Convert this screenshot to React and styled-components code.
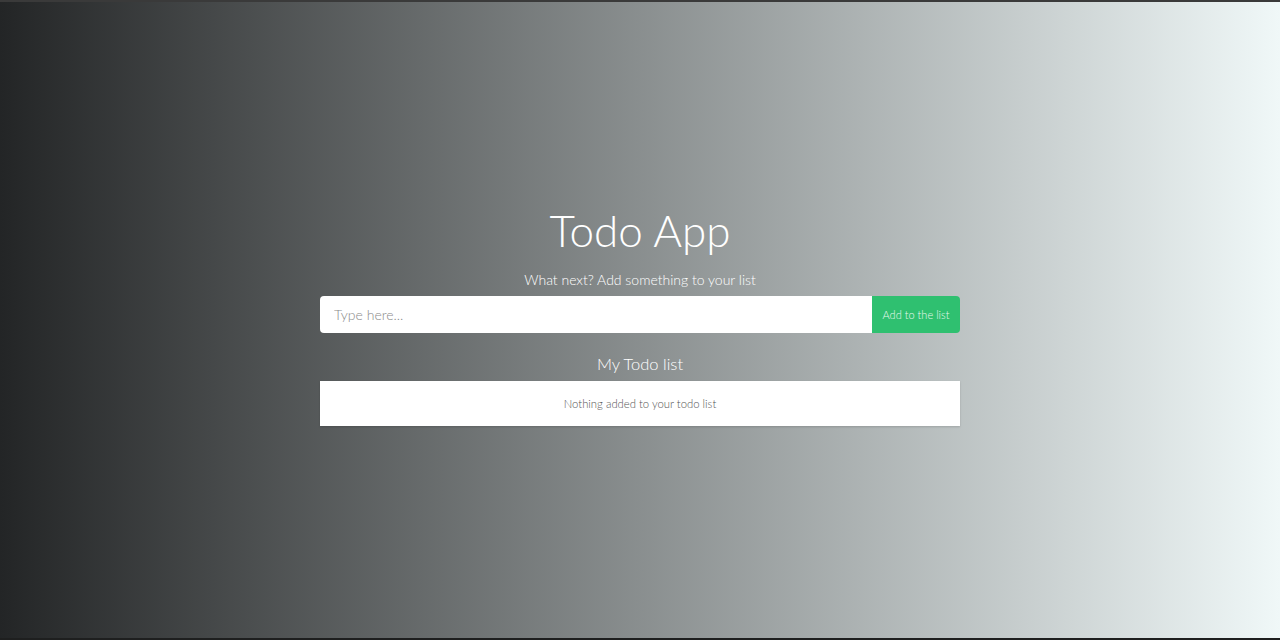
import React, { useState } from 'react';
import styled, { createGlobalStyle } from 'styled-components';

const GlobalStyle = createGlobalStyle`
  html, body {
    margin: 0;
    padding: 0;
  }
  body {
    font-family: Lato, "Open Sans", sans-serif;
  }
`;

const Page = styled.div`
  box-sizing: border-box;
  height: 640px;
  border-top: 2px solid #3a3a3a;
  border-bottom: 2px solid #1e1f1f;
  background: linear-gradient(to right, #232526, #f0f8f8);
  display: flex;
  justify-content: center;
  padding-top: 201px;
`;

const Wrapper = styled.div`
  width: 640px;
  display: flex;
  flex-direction: column;
  align-items: center;
`;

const Title = styled.h1`
  margin: 0;
  font-size: 44px;
  font-weight: 300;
  color: #fff;
  line-height: 54px;
`;

const Subtitle = styled.p`
  margin: 13px 0 6px;
  font-size: 14px;
  font-weight: 300;
  color: #fff;
  line-height: 20px;
`;

const Form = styled.form`
  display: flex;
  width: 100%;
  height: 37px;
`;

const Input = styled.input`
  flex: 1;
  box-sizing: border-box;
  border: none;
  border-radius: 4px 0 0 4px;
  padding: 0 14px;
  font-family: Lato, sans-serif;
  font-size: 14px;
  font-weight: 300;
  color: #333;
  outline: none;
  &::placeholder {
    color: #8a8a8a;
  }
`;

const AddButton = styled.button`
  width: 88px;
  border: none;
  border-radius: 0 4px 4px 0;
  background: #2fc070;
  color: #e8f8ee;
  font-family: Lato, sans-serif;
  font-size: 11px;
  font-weight: 300;
  cursor: pointer;
`;

const ListTitle = styled.h2`
  margin: 20px 0 6px;
  font-size: 16.5px;
  font-weight: 300;
  color: #fff;
  line-height: 22px;
`;

const List = styled.ul`
  margin: 0;
  padding: 0;
  list-style: none;
  width: 100%;
  background: #fff;
  box-shadow: 0 1px 2px rgba(0, 0, 0, 0.15);
`;

const Empty = styled.li`
  height: 45px;
  display: flex;
  align-items: center;
  justify-content: center;
  font-size: 11.3px;
  font-weight: 300;
  color: #555;
`;

const Item = styled(Empty)`
  justify-content: flex-start;
  padding: 0 14px;
  border-bottom: 1px solid #eee;
`;

const App = () => {
  const [text, setText] = useState('');
  const [todos, setTodos] = useState([]);

  const addTodo = (e) => {
    e.preventDefault();
    if (!text.trim()) return;
    setTodos([...todos, text.trim()]);
    setText('');
  };

  return (
    <>
      <GlobalStyle />
      <Page>
        <Wrapper>
          <Title>Todo App</Title>
          <Subtitle>What next? Add something to your list</Subtitle>
          <Form onSubmit={addTodo}>
            <Input
              placeholder="Type here..."
              value={text}
              onChange={(e) => setText(e.target.value)}
            />
            <AddButton type="submit">Add to the list</AddButton>
          </Form>
          <ListTitle>My Todo list</ListTitle>
          <List>
            {todos.length === 0 ? (
              <Empty>Nothing added to your todo list</Empty>
            ) : (
              todos.map((t, i) => <Item key={i}>{t}</Item>)
            )}
          </List>
        </Wrapper>
      </Page>
    </>
  );
};

export default App;
